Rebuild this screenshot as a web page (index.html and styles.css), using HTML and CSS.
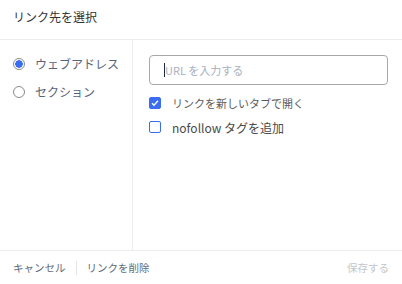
FILE: index.html
```html
<!DOCTYPE html>
<html lang="ja">

<head>
    <meta charset="UTF-8">
    <meta name="viewport" content="width=device-width, initial-scale=1.0">
    <title>リンク先を選択</title>
    <link rel="stylesheet" href="styles.css">
</head>

<body>
    <section class="dialog">
        <header class="head">リンク先を選択</header>

        <div class="body">
            <div class="side">
                <label class="choice">
                    <input type="radio" name="target" checked>
                    <span>ウェブアドレス</span>
                </label>
                <label class="choice">
                    <input type="radio" name="target">
                    <span>セクション</span>
                </label>
            </div>

            <div class="pane">
                <div class="url">
                    <span class="caret"></span>
                    <span class="hint">URL を入力する</span>
                </div>
                <label class="check">
                    <input type="checkbox" checked>
                    <span>リンクを新しいタブで開く</span>
                </label>
                <label class="check big">
                    <input type="checkbox">
                    <span>nofollow タグを追加</span>
                </label>
            </div>
        </div>

        <footer class="foot">
            <a class="link">キャンセル</a>
            <span class="sep"></span>
            <a class="link">リンクを削除</a>
            <a class="save">保存する</a>
        </footer>
    </section>
</body>

</html>
```

FILE: styles.css
```css
* {
    margin: 0;
    padding: 0;
    box-sizing: border-box;
}

body {
    font-family: "Noto Sans CJK JP", "Noto Sans", sans-serif;
    background: #fff;
    color: #333;
}

.dialog {
    width: 402px;
    height: 284px;
    display: flex;
    flex-direction: column;
}

.head {
    height: 40px;
    padding: 0 13px 6px;
    display: flex;
    align-items: center;
    font-size: 12px;
    color: #333;
    border-bottom: 1px solid #ececec;
}

.body {
    flex: 1;
    display: flex;
}

.side {
    width: 133px;
    border-right: 1px solid #ececec;
    padding: 14px 0 0 13px;
    display: flex;
    flex-direction: column;
    gap: 9px;
}

.choice {
    display: flex;
    align-items: center;
    gap: 10px;
    font-size: 12px;
    color: #56647a;
    height: 19px;
}

.choice input {
    appearance: none;
    width: 12px;
    height: 12px;
    border-radius: 50%;
    border: 1px solid #8a8a8a;
    background: #fff;
}

.choice input:checked {
    background: radial-gradient(circle, #3a6df0 0 3.5px, #fff 4px);
}

.pane {
    flex: 1;
    padding: 15px 14px 0 16px;
}

.url {
    height: 30px;
    border: 1px solid #a8a8a8;
    border-radius: 4px;
    display: flex;
    align-items: center;
    padding-left: 14px;
    margin-bottom: 8px;
}

.caret {
    width: 1px;
    height: 14px;
    background: #1b2a3a;
}

.hint {
    font-size: 11px;
    color: #a7b1bd;
}

.check {
    display: flex;
    align-items: center;
    gap: 11px;
    font-size: 11px;
    color: #5c5c5c;
    height: 20px;
    margin-bottom: 4px;
}

.check.big {
    font-size: 12px;
    color: #4a4a4a;
}

.check input {
    appearance: none;
    width: 12px;
    height: 12px;
    border: 1.5px solid #3a6df0;
    border-radius: 2px;
    background: #fff;
}

.check input:checked {
    background: #3a6df0 url("data:image/svg+xml,%3Csvg xmlns='http://www.w3.org/2000/svg' viewBox='0 0 12 12'%3E%3Cpath d='M3 6.2l2 2 4-4.4' fill='none' stroke='%23fff' stroke-width='1.4'/%3E%3C/svg%3E") center / 12px no-repeat;
}

.foot {
    height: 34px;
    border-top: 1px solid #ececec;
    display: flex;
    align-items: center;
    padding: 0 13px;
    font-size: 10.5px;
}

.link {
    color: #5f6c7c;
}

.sep {
    width: 1px;
    height: 14px;
    background: #e4e4e4;
    margin: 0 10px;
}

.save {
    margin-left: auto;
    color: #c3c6ca;
}
```
